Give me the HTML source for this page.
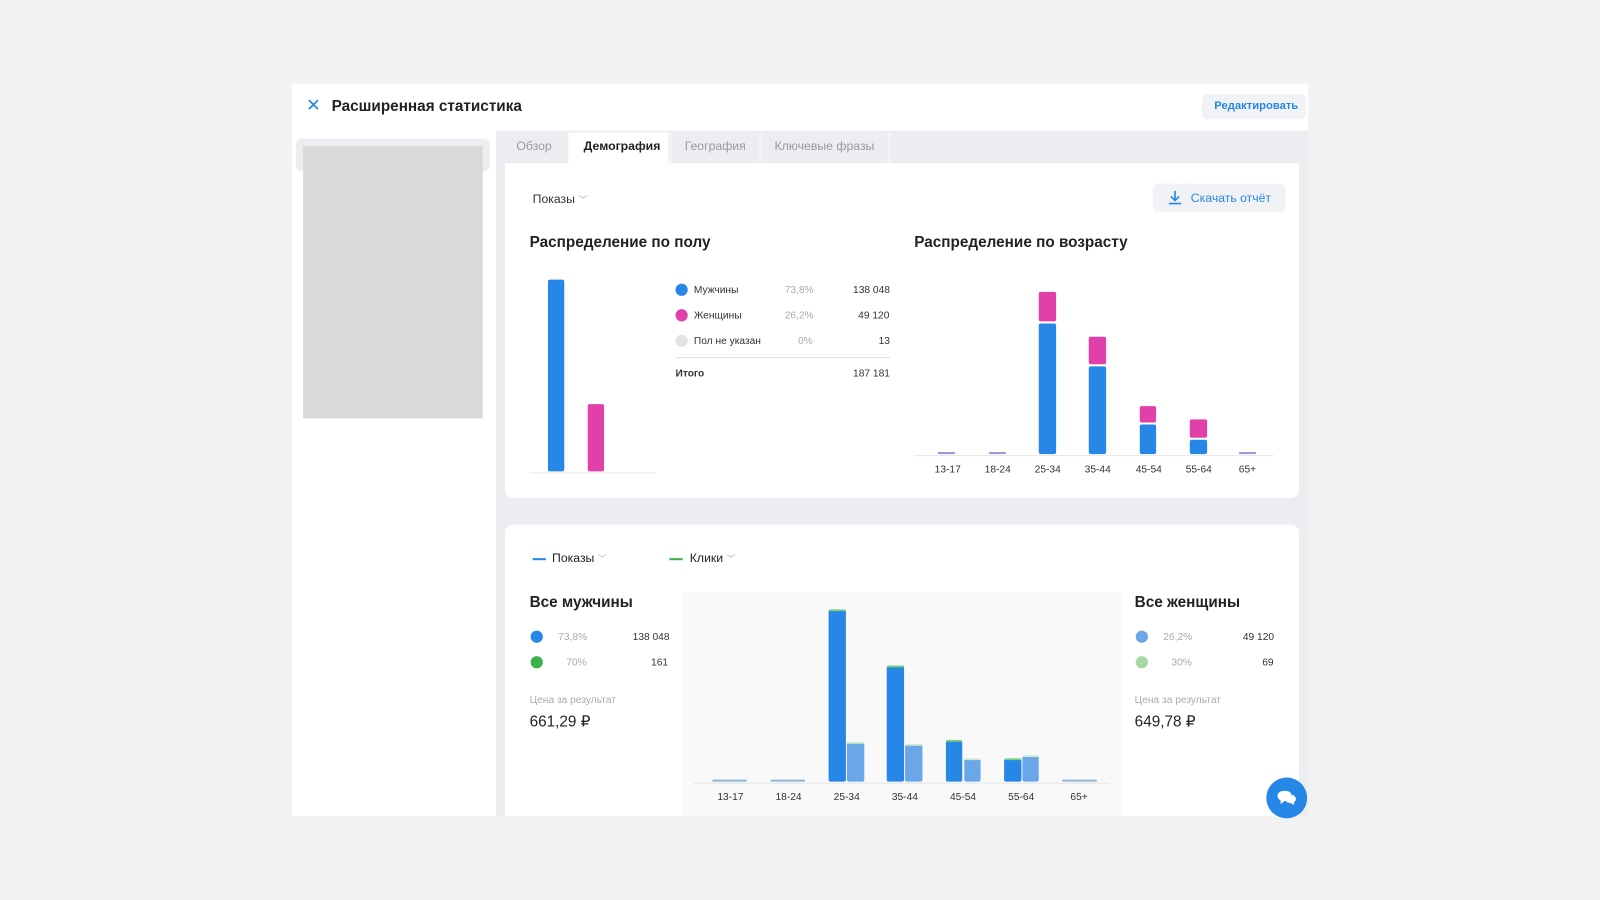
<!DOCTYPE html><html><head><meta charset="utf-8"><style>
*{margin:0;padding:0;box-sizing:border-box}
body{width:1600px;height:900px;background:#f2f2f3;font-family:"Liberation Sans",sans-serif;position:relative;overflow:hidden;color:#222}
#w{position:absolute;left:0;top:0;width:1568px;height:882px;transform:scale(1.0204);transform-origin:0 0}
.a{position:absolute}
.t{position:absolute;white-space:nowrap}
.b{position:absolute;border-radius:2px}
.bl{background:#2787e6}.pk{background:#e040a8}.lb{background:#6aa7e8}
.ax{font-size:10px;color:#333}
.gr{color:#aaa}
</style></head><body><div id="w">
<div class="a" style="left:286px;top:82px;width:996px;height:718px;background:#fff"></div>
<div class="t" style="left:300px;top:94px;font-size:17px;color:#2787e6">✕</div>
<div class="t" style="left:325px;top:96px;font-size:15px;font-weight:bold;color:#222">Расширенная статистика</div>
<div class="a" style="left:1178px;top:92px;width:102px;height:25px;background:#f0f2f5;border-radius:6px"></div>
<div class="t" style="left:1190px;top:98px;font-size:11px;font-weight:bold;color:#2787e6">Редактировать</div>
<div class="a" style="left:486px;top:128px;width:796px;height:672px;background:#ebedf0"></div>
<div class="a" style="left:290px;top:136px;width:190px;height:32px;background:#ebedf0;border-radius:6px"></div>
<div class="a" style="left:297px;top:143px;width:176px;height:267px;background:#d9d9d9"></div>
<div class="a" style="left:557px;top:130px;width:98px;height:32px;background:#fff"></div>
<div class="a" style="left:656px;top:130px;width:2px;height:30px;background:#f5f5f5"></div>
<div class="a" style="left:744px;top:130px;width:2px;height:30px;background:#f5f5f5"></div>
<div class="a" style="left:870px;top:130px;width:2px;height:30px;background:#f5f5f5"></div>
<div class="t" style="left:506px;top:136px;font-size:12px;color:#999">Обзор</div>
<div class="t" style="left:572px;top:136px;font-size:12px;font-weight:bold;color:#222">Демография</div>
<div class="t" style="left:671px;top:136px;font-size:12px;color:#999">География</div>
<div class="t" style="left:759px;top:136px;font-size:12px;color:#999">Ключевые фразы</div>
<div class="a" style="left:495px;top:160px;width:778px;height:328px;background:#fff;border-radius:0 0 8px 8px"></div>
<div class="t" style="left:522px;top:188px;font-size:12px;color:#333">Показы <span style="color:#aaa;font-size:9px">﹀</span></div>
<div class="a" style="left:1130px;top:180px;width:130px;height:28px;background:#f0f2f5;border-radius:6px"></div>
<svg class="a" style="left:1144px;top:186px" width="15" height="15" viewBox="0 0 15 15"><path d="M7.5 1v9M3.5 6.5l4 4 4-4M1.5 13.5h12" stroke="#2787e6" stroke-width="1.6" fill="none"/></svg>
<div class="t" style="left:1167px;top:187px;font-size:12px;color:#2787e6">Скачать отчёт</div>
<div class="t" style="left:519px;top:229px;font-size:15px;font-weight:bold">Распределение по полу</div>
<div class="t" style="left:896px;top:229px;font-size:15px;font-weight:bold">Распределение по возрасту</div>
<div class="b bl" style="left:537px;top:274px;width:16px;height:188px"></div>
<div class="b pk" style="left:576px;top:396px;width:16px;height:66px"></div>
<div class="a" style="left:519px;top:463px;width:124px;height:1px;background:#e8e8e8"></div>
<div class="a" style="left:662px;top:278px;width:12px;height:12px;border-radius:50%;background:#2787e6"></div>
<div class="a" style="left:662px;top:303px;width:12px;height:12px;border-radius:50%;background:#e040a8"></div>
<div class="a" style="left:662px;top:328px;width:12px;height:12px;border-radius:50%;background:#e2e2e4"></div>
<div class="t ax" style="left:680px;top:279px">Мужчины</div><div class="t ax gr" style="left:769px;top:279px">73,8%</div><div class="t ax" style="left:836px;top:279px">138 048</div>
<div class="t ax" style="left:680px;top:304px">Женщины</div><div class="t ax gr" style="left:769px;top:304px">26,2%</div><div class="t ax" style="left:841px;top:304px">49 120</div>
<div class="t ax" style="left:680px;top:329px">Пол не указан</div><div class="t ax gr" style="left:782px;top:329px">0%</div><div class="t ax" style="left:861px;top:329px">13</div>
<div class="a" style="left:662px;top:350px;width:210px;height:1px;background:#ddd"></div>
<div class="t ax" style="left:662px;top:361px;font-weight:bold">Итого</div><div class="t ax" style="left:836px;top:361px">187 181</div>
<div class="a" style="left:896px;top:446px;width:352px;height:1px;background:#e8e8e8"></div>
<div class="b" style="left:919px;top:443px;width:17px;height:2px;background:#9a9ad8"></div>
<div class="b" style="left:969px;top:443px;width:17px;height:2px;background:#9a9ad8"></div>
<div class="b" style="left:1214px;top:443px;width:17px;height:2px;background:#9a9ad8"></div>
<div class="b pk" style="left:1018px;top:286px;width:17px;height:29px"></div><div class="b bl" style="left:1018px;top:317px;width:17px;height:128px"></div>
<div class="b pk" style="left:1067px;top:330px;width:17px;height:27px"></div><div class="b bl" style="left:1067px;top:359px;width:17px;height:86px"></div>
<div class="b pk" style="left:1117px;top:398px;width:16px;height:16px"></div><div class="b bl" style="left:1117px;top:416px;width:16px;height:29px"></div>
<div class="b pk" style="left:1166px;top:411px;width:17px;height:18px"></div><div class="b bl" style="left:1166px;top:431px;width:17px;height:14px"></div>
<div class="t ax" style="left:916px;top:455px">13-17</div><div class="t ax" style="left:965px;top:455px">18-24</div><div class="t ax" style="left:1014px;top:455px">25-34</div><div class="t ax" style="left:1063px;top:455px">35-44</div><div class="t ax" style="left:1113px;top:455px">45-54</div><div class="t ax" style="left:1162px;top:455px">55-64</div><div class="t ax" style="left:1214px;top:455px">65+</div>
<div class="a" style="left:495px;top:514px;width:778px;height:286px;background:#fff;border-radius:8px 8px 0 0"></div>
<div class="a" style="left:522px;top:547px;width:13px;height:2px;background:#2787e6"></div>
<div class="t" style="left:541px;top:540px;font-size:12px">Показы <span style="color:#aaa;font-size:9px">﹀</span></div>
<div class="a" style="left:656px;top:547px;width:13px;height:2px;background:#3cb04a"></div>
<div class="t" style="left:676px;top:540px;font-size:12px">Клики <span style="color:#aaa;font-size:9px">﹀</span></div>
<div class="t" style="left:519px;top:582px;font-size:15px;font-weight:bold">Все мужчины</div>
<div class="t" style="left:1112px;top:582px;font-size:15px;font-weight:bold">Все женщины</div>
<div class="a" style="left:520px;top:618px;width:12px;height:12px;border-radius:50%;background:#2787e6"></div>
<div class="a" style="left:520px;top:643px;width:12px;height:12px;border-radius:50%;background:#3cb04a"></div>
<div class="t ax gr" style="left:547px;top:619px">73,8%</div><div class="t ax" style="left:620px;top:619px">138 048</div>
<div class="t ax gr" style="left:555px;top:644px">70%</div><div class="t ax" style="left:638px;top:644px">161</div>
<div class="t" style="left:519px;top:681px;font-size:10px;color:#aaa">Цена за результат</div>
<div class="t" style="left:519px;top:698px;font-size:15px">661,29 ₽</div>
<div class="a" style="left:1113px;top:618px;width:12px;height:12px;border-radius:50%;background:#6aa7e8"></div>
<div class="a" style="left:1113px;top:643px;width:12px;height:12px;border-radius:50%;background:#a8d8a8"></div>
<div class="t ax gr" style="left:1140px;top:619px">26,2%</div><div class="t ax" style="left:1218px;top:619px">49 120</div>
<div class="t ax gr" style="left:1148px;top:644px">30%</div><div class="t ax" style="left:1237px;top:644px">69</div>
<div class="t" style="left:1112px;top:681px;font-size:10px;color:#aaa">Цена за результат</div>
<div class="t" style="left:1112px;top:698px;font-size:15px">649,78 ₽</div>
<div class="a" style="left:668px;top:580px;width:432px;height:220px;background:#f9f9f9"></div>
<div class="a" style="left:680px;top:767px;width:408px;height:1px;background:#e6e6e6"></div>
<div class="b" style="left:698px;top:764px;width:34px;height:2px;background:#8ab4d8"></div>
<div class="b" style="left:755px;top:764px;width:34px;height:2px;background:#8ab4d8"></div>
<div class="b" style="left:1041px;top:764px;width:34px;height:2px;background:#8ab4d8"></div>
<div class="b bl" style="left:812px;top:597px;width:17px;height:169px;border-top:2px solid #7cd07c"></div><div class="b lb" style="left:830px;top:727px;width:17px;height:39px;border-top:2px solid #cfe8cf"></div>
<div class="b bl" style="left:869px;top:652px;width:17px;height:114px;border-top:2px solid #7cd07c"></div><div class="b lb" style="left:887px;top:729px;width:17px;height:37px;border-top:2px solid #cfe8cf"></div>
<div class="b bl" style="left:927px;top:725px;width:16px;height:41px;border-top:2px solid #7cd07c"></div><div class="b lb" style="left:945px;top:743px;width:16px;height:23px;border-top:2px solid #cfe8cf"></div>
<div class="b bl" style="left:984px;top:743px;width:17px;height:23px;border-top:2px solid #7cd07c"></div><div class="b lb" style="left:1002px;top:740px;width:16px;height:26px;border-top:2px solid #cfe8cf"></div>
<div class="t ax" style="left:703px;top:776px">13-17</div><div class="t ax" style="left:760px;top:776px">18-24</div><div class="t ax" style="left:817px;top:776px">25-34</div><div class="t ax" style="left:874px;top:776px">35-44</div><div class="t ax" style="left:931px;top:776px">45-54</div><div class="t ax" style="left:988px;top:776px">55-64</div><div class="t ax" style="left:1049px;top:776px">65+</div>
<div class="a" style="left:1241px;top:762px;width:40px;height:40px;border-radius:50%;background:#2787e6"></div>
<svg class="a" style="left:1250px;top:772px" width="22" height="20" viewBox="0 0 22 20"><path d="M2 8c0-3 3-5 7-5s7 2 7 5-3 5-7 5l-4 3v-3.5C3 11 2 10 2 8z" fill="#fff"/><path d="M17 7c2 1 3 2.5 3 4 0 1.5-1 2.6-2 3.3V17l-3-2c-2 0-4-.7-5-2" fill="#fff"/></svg>
</div></body></html>
